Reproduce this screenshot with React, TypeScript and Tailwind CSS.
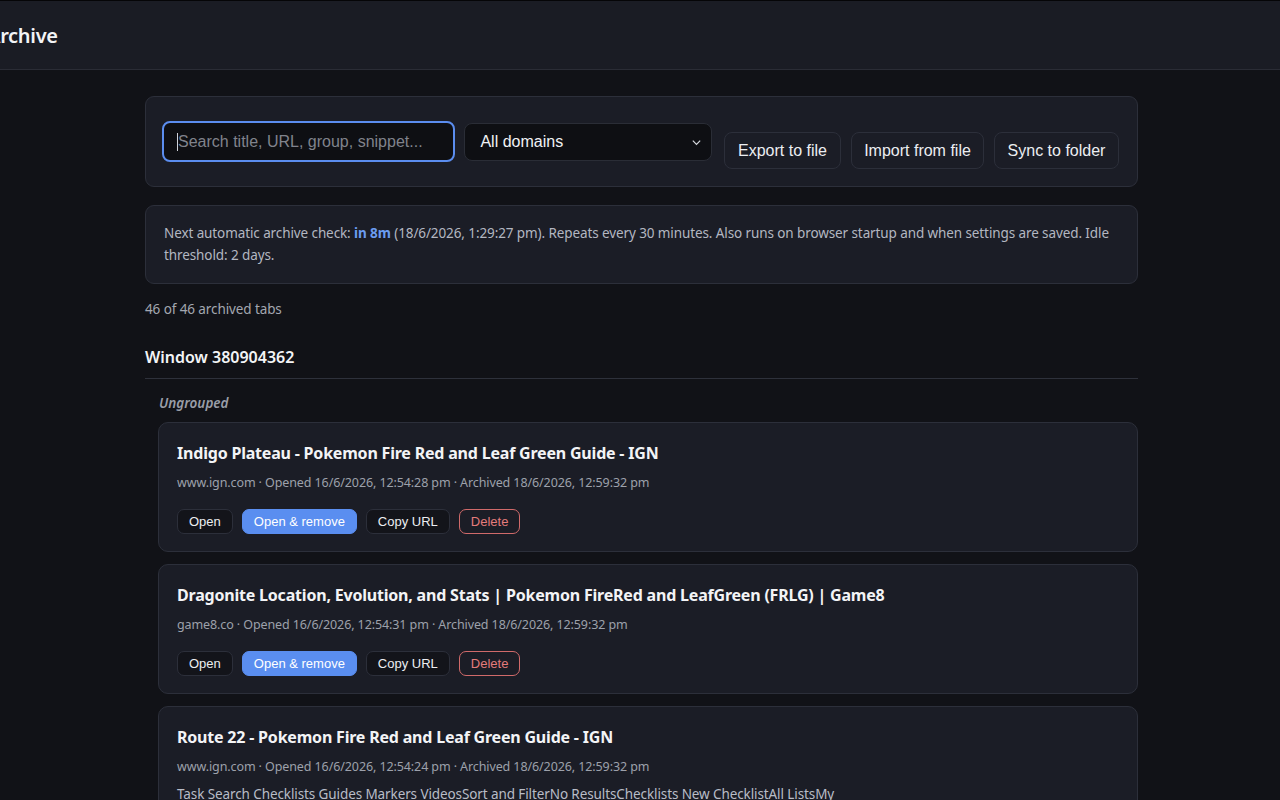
import React from "react";

const sans = "font-['Noto_Sans','Open_Sans',sans-serif]";
const arial = "font-['Liberation_Sans',Arial,sans-serif]";

type Tab = { title: string; meta: string; snippet?: string };

const tabs: Tab[] = [
  {
    title: "Indigo Plateau - Pokemon Fire Red and Leaf Green Guide - IGN",
    meta: "www.ign.com · Opened 16/6/2026, 12:54:28 pm · Archived 18/6/2026, 12:59:32 pm",
  },
  {
    title: "Dragonite Location, Evolution, and Stats | Pokemon FireRed and LeafGreen (FRLG) | Game8",
    meta: "game8.co · Opened 16/6/2026, 12:54:31 pm · Archived 18/6/2026, 12:59:32 pm",
  },
  {
    title: "Route 22 - Pokemon Fire Red and Leaf Green Guide - IGN",
    meta: "www.ign.com · Opened 16/6/2026, 12:54:24 pm · Archived 18/6/2026, 12:59:32 pm",
    snippet:
      "Task Search Checklists Guides Markers VideosSort and FilterNo ResultsChecklists New ChecklistAll ListsMy",
  },
];

function TabCard({ tab }: { tab: Tab }) {
  return (
    <div className="rounded-[10px] border border-[#2c2f3a] bg-[#1b1d26] px-[18px] pt-[18px] pb-[17px]">
      <div className={`${sans} text-[16px] font-bold leading-[24px] tracking-[-0.2px] text-[#f3f4f6]`}>{tab.title}</div>
      <div className={`${sans} mt-[9px] text-[12.5px] leading-[18px] tracking-[-0.1px] text-[#9da1ab]`}>{tab.meta}</div>
      {tab.snippet ? (
        <div className={`${sans} mt-[8px] text-[13.5px] leading-[20px] tracking-[-0.1px] text-[#b8bcc6]`}>{tab.snippet}</div>
      ) : (
        <div className={`${arial} mt-[17px] flex gap-[9px] text-[13px]`}>
          <button className="h-[25px] rounded-[7px] border border-[#2c2f3a] bg-[#13141a] px-[11px] text-[#eceef2]">
            Open
          </button>
          <button className="h-[25px] rounded-[7px] border border-[#5a8ef0] bg-[#5a8ef0] px-[11px] text-white">
            Open &amp; remove
          </button>
          <button className="h-[25px] rounded-[7px] border border-[#2c2f3a] bg-[#13141a] px-[11px] text-[#eceef2]">
            Copy URL
          </button>
          <button className="h-[25px] rounded-[7px] border border-[#d06a6a] bg-transparent px-[11px] text-[#e47b7b]">
            Delete
          </button>
        </div>
      )}
    </div>
  );
}

export default function App() {
  return (
    <div className={`${sans} min-h-[800px] w-full overflow-hidden bg-[#111217] text-[#e5e7eb]`}>
      <header className="flex h-[70px] items-center border-t border-b border-t-[#050507] border-b-[#2a2c35] bg-[#1a1c24] pt-[2px]">
        <h1 className={`${sans} ml-[-13px] text-[20px] font-semibold tracking-[-0.3px] text-[#f3f4f6]`}>Archive</h1>
      </header>

      <main className="ml-[145px] w-[993px] pt-[26px]">
        <div className="flex items-start rounded-[9px] border border-[#2c2f3a] bg-[#1b1d26] pl-[16px] pr-[18px] pt-[24px] pb-[17px]">
          <div className="flex h-[41px] w-[294px] items-center rounded-[8px] border-2 border-[#5b8def] bg-[#0e0f13] pl-[13px]">
            <span className="h-[18px] w-px bg-[#d0d3da]" />
            <span className={`${arial} text-[16px] text-[#80838c]`}>Search title, URL, group, snippet...</span>
          </div>
          <div className="ml-[9px] mt-[2px] flex h-[38px] w-[248px] items-center justify-between rounded-[8px] border border-[#2a2d36] bg-[#0e0f13] pl-[15px] pr-[9px]">
            <span className={`${arial} text-[16px] text-[#f1f2f5]`}>All domains</span>
            <svg width="11" height="11" viewBox="0 0 12 12" fill="none" stroke="#d8dbe0" strokeWidth="1.3">
              <path d="M2 4l4 4 4-4" />
            </svg>
          </div>
          <div className={`${arial} ml-[12px] mt-[11px] flex gap-[10px] text-[16px] text-[#eceef2]`}>
            <button className="h-[37px] w-[117px] rounded-[8px] border border-[#2c2f3a] bg-[#1b1d26]">Export to file</button>
            <button className="h-[37px] w-[133px] rounded-[8px] border border-[#2c2f3a] bg-[#1b1d26]">Import from file</button>
            <button className="h-[37px] w-[125px] rounded-[8px] border border-[#2c2f3a] bg-[#1b1d26]">Sync to folder</button>
          </div>
        </div>

        <div className="mt-[18px] rounded-[9px] border border-[#2c2f3a] bg-[#1b1d26] px-[18px] pt-[17px] pb-[17px]">
          <p className="text-[13.5px] leading-[21.5px] tracking-[-0.1px] text-[#b3b7c1]">
            Next automatic archive check: <span className="font-bold text-[#6b9cf0]">in 8m</span> (18/6/2026, 1:29:27 pm).
            Repeats every 30 minutes. Also runs on browser startup and when settings are saved. Idle threshold: 2 days.
          </p>
        </div>

        <div className="mt-[15px] text-[13.5px] leading-[20px] tracking-[-0.1px] text-[#a3a7b0]">46 of 46 archived tabs</div>

        <h2 className="mt-[27px] border-b border-[#2e313b] pb-[10px] text-[16px] font-semibold leading-[22px] text-[#f3f4f6]">
          Window 380904362
        </h2>

        <div className="pl-[13px]">
          <div className="mt-[14px] mb-[9px] pl-px text-[13.5px] font-semibold italic leading-[20px] text-[#9a9ea8]">Ungrouped</div>
          <div className="flex flex-col gap-[12px]">
            {tabs.map((t) => (
              <TabCard key={t.title} tab={t} />
            ))}
          </div>
        </div>
      </main>
    </div>
  );
}
